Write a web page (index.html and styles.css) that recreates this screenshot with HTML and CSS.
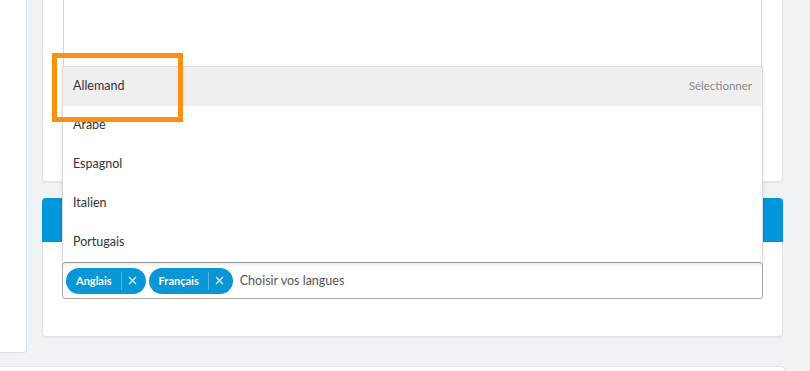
FILE: index.html
```html
<!DOCTYPE html>
<html lang="fr">
<head>
    <meta charset="UTF-8">
    <meta name="viewport" content="width=device-width, initial-scale=1.0">
    <title>Langues</title>
    <link rel="stylesheet" href="styles.css">
</head>
<body>
    <div class="page">
        <div class="top-row">
            <div class="sidebar"></div>

            <div class="main">
                <div class="card card-notes">
                    <div class="notes-box"></div>
                </div>

                <div class="card card-languages">
                    <div class="card-header"></div>
                    <div class="card-body">
                        <div class="select">
                            <ul class="select-options">
                                <li class="option option-active">
                                    <span>Allemand</span>
                                    <span class="option-hint">Sélectionner</span>
                                </li>
                                <li class="option"><span>Arabe</span></li>
                                <li class="option"><span>Espagnol</span></li>
                                <li class="option"><span>Italien</span></li>
                                <li class="option"><span>Portugais</span></li>
                                <div class="highlight"></div>
                            </ul>

                            <div class="select-input">
                                <span class="tag">
                                    <span class="tag-label">Anglais</span>
                                    <span class="tag-remove">
                                        <svg width="9" height="9" viewBox="0 0 9 9"><path d="M1 1L8 8M8 1L1 8" stroke="currentColor" stroke-width="1.3" fill="none"/></svg>
                                    </span>
                                </span>
                                <span class="tag">
                                    <span class="tag-label">Français</span>
                                    <span class="tag-remove">
                                        <svg width="9" height="9" viewBox="0 0 9 9"><path d="M1 1L8 8M8 1L1 8" stroke="currentColor" stroke-width="1.3" fill="none"/></svg>
                                    </span>
                                </span>
                                <span class="placeholder">Choisir vos langues</span>
                            </div>
                        </div>
                    </div>
                </div>
            </div>
        </div>

        <div class="footer-card"></div>
    </div>
</body>
</html>
```

FILE: styles.css
```css
body {
    font-family: Lato, "Open Sans", sans-serif;
    background-color: #f0f3f6;
    margin: 0;
    color: #333;
    overflow: hidden;
}

.page {
    height: 371px;
}

.top-row {
    display: flex;
    align-items: flex-start;
    gap: 15px;
}

.sidebar {
    width: 26px;
    height: 352px;
    background: white;
    border-right: 1px solid #dde1e5;
    border-bottom: 1px solid #dde1e5;
    border-radius: 0 0 4px 0;
}

.main {
    width: 741px;
}

.card {
    background: white;
    border: 1px solid #e1e5e9;
    border-radius: 4px;
    box-shadow: 0 1px 1px rgba(0, 0, 0, 0.06);
    box-sizing: border-box;
}

.card-notes {
    margin-top: -30px;
    height: 212px;
    padding: 0 20px;
}

.notes-box {
    height: 190px;
    border: 1px solid #d6d6d6;
    border-radius: 3px;
}

.card-languages {
    margin-top: 16px;
    height: 139px;
    border-top: none;
}

.card-header {
    height: 44px;
    margin: 0 -1px;
    background: #0096d9;
    border-radius: 4px 4px 0 0;
}

.card-body {
    padding: 20px 19px;
}

.select {
    position: relative;
}

.select-options {
    position: absolute;
    left: 0;
    right: 0;
    bottom: 100%;
    margin: 0;
    padding: 0;
    list-style: none;
    background: white;
    border: 1px solid #dcdcdc;
    border-bottom: none;
    box-shadow: 0 2px 4px rgba(0, 0, 0, 0.12);
    z-index: 2;
}

.option {
    display: flex;
    justify-content: space-between;
    align-items: center;
    height: 39px;
    padding: 0 10px;
    font-size: 12.5px;
    line-height: 16px;
    padding-bottom: 2px;
    box-sizing: border-box;
}

.option-active {
    background: #efefef;
}

.option-hint {
    font-size: 11.5px;
    color: #8a8a8a;
}

.highlight {
    position: absolute;
    left: -11px;
    top: -14px;
    width: 121px;
    height: 59px;
    border: 5px solid #ff8f0f;
}

.select-input {
    display: flex;
    align-items: center;
    gap: 3px;
    height: 35px;
    padding: 0 3px;
    border: 1px solid #a8a8a8;
    border-radius: 3px;
}

.tag {
    display: flex;
    align-items: center;
    height: 26px;
    background: #0a95d5;
    color: white;
    border-radius: 13px;
}

.tag-label {
    padding: 0 9px 0 10px;
    font-size: 11px;
    font-weight: bold;
    border-right: 1px solid rgba(255, 255, 255, 0.3);
    line-height: 18px;
}

.tag-remove {
    display: flex;
    justify-content: center;
    width: 21px;
    padding-right: 3px;
    color: rgba(255, 255, 255, 0.85);
}

.placeholder {
    margin-left: 4px;
    font-size: 12.5px;
    color: #555;
}

.footer-card {
    margin-top: 13px;
    width: 784px;
    height: 20px;
    background: white;
    border-top: 1px solid #e1e5e9;
    border-right: 1px solid #e1e5e9;
    border-radius: 0 4px 0 0;
}
```
